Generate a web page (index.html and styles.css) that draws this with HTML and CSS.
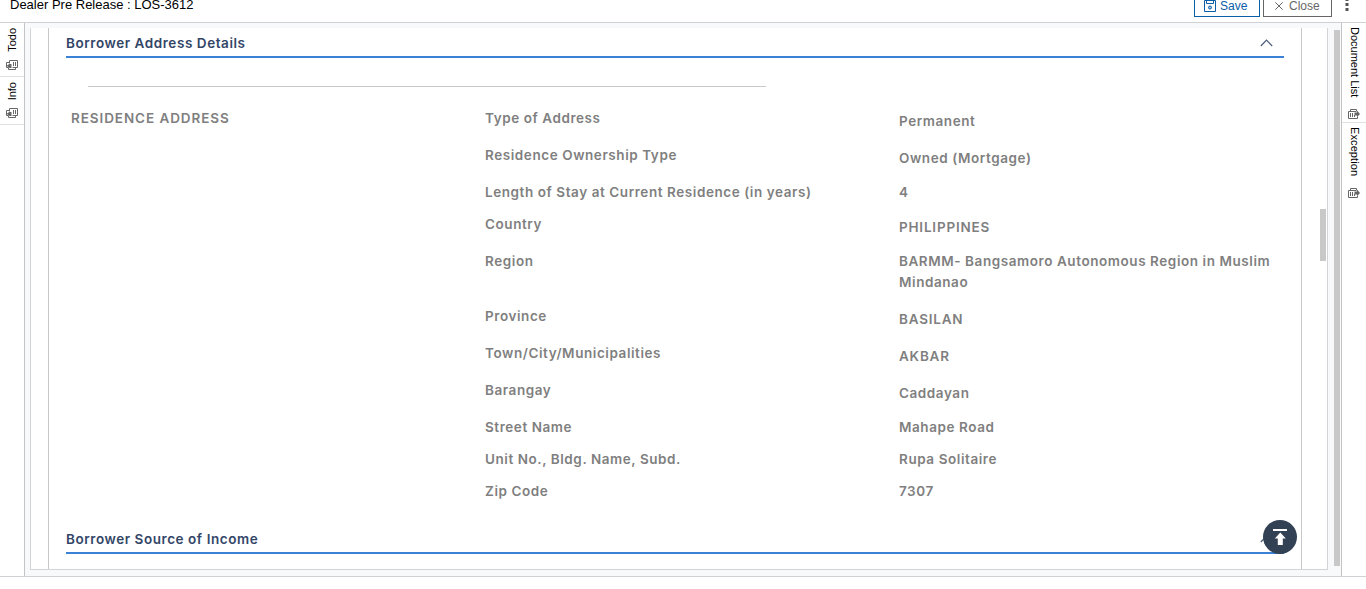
FILE: index.html
```html
<!DOCTYPE html>
<html lang="en">
<head>
<meta charset="utf-8">
<title>Dealer Pre Release : LOS-3612</title>
<link rel="stylesheet" href="styles.css">
</head>
<body>
<svg class="defs" width="0" height="0">
  <symbol id="docs" viewBox="0 0 12 10">
    <path d="M3.500 3.500V.5h8v7h-5M9.500 7.500v2h-7v-2M3.500 2.500h-3v5h2" fill="none" stroke="#666"/>
    <path d="M1 5h1.500V4h3v4h-2l-2-1.500z" fill="#666"/>
    <path d="M7.500 2v4M9.500 2v4" stroke="#666"/>
  </symbol>
  <symbol id="docs-out" viewBox="0 0 12 10">
    <path d="M2.500 2.500v-2h6v2M8 2.500H.5v7h9v-2" fill="none" stroke="#666"/>
    <path d="M6.500 3.500H9V1.500l3 3.500-3 3V6.500H6.500z" fill="#666"/>
    <path d="M2.500 4v4M4.500 4v4M6.500 6v2" stroke="#666"/>
  </symbol>
</svg>
<header class="topbar">
  <h1 class="title">Dealer Pre Release : LOS-3612</h1>
  <div class="actions">
    <button class="btn save">
      <svg width="12" height="12" viewBox="0 0 12 12" fill="none" stroke="#0b5ea8"><path d="M.5.5h11v11H.5zM2.500.5v3h7v-3"/><circle cx="6" cy="7.500" r="1.500" fill="#9cc4e8"/></svg>
      <span>Save</span>
    </button>
    <button class="btn close">
      <svg width="8" height="8" viewBox="0 0 8 8" stroke="#666"><path d="M.3.3l7.400 7.400M7.700.3L.3 7.700"/></svg>
      <span>Close</span>
    </button>
    <svg class="more" width="4" height="16" viewBox="0 0 4 16" fill="#555"><path d="M.5 3h3v3h-3zM.5 8h3v3h-3zM.5 13h3v3h-3z"/></svg>
  </div>
</header>
<div class="workspace">
  <nav class="rail left">
    <div class="tab todo"><span class="up">Todo</span><svg width="12" height="10"><use href="#docs"/></svg></div>
    <div class="tab info"><span class="up">Info</span><svg width="12" height="10"><use href="#docs"/></svg></div>
  </nav>
  <main class="main">
    <div class="panel">
      <div class="card">
        <section class="section">
          <h2 class="heading"><span>Borrower Address Details</span><svg width="13" height="8" viewBox="0 0 13 8" fill="none" stroke="#4b5b78" stroke-width="1.200"><path d="M.8 7l5.700-5.800L12.200 7"/></svg></h2>
          <hr class="rule">
          <div class="details">
            <h3 class="group">RESIDENCE ADDRESS</h3>
            <dl class="rows">
              <div class="row drop"><dt>Type of Address</dt><dd>Permanent</dd></div>
              <div class="row drop"><dt>Residence Ownership Type</dt><dd>Owned (Mortgage)</dd></div>
              <div class="row"><dt>Length of Stay at Current Residence (in years)</dt><dd>4</dd></div>
              <div class="row drop"><dt>Country</dt><dd class="caps">PHILIPPINES</dd></div>
              <div class="row double"><dt>Region</dt><dd>BARMM- Bangsamoro Autonomous Region in Muslim Mindanao</dd></div>
              <div class="row drop"><dt>Province</dt><dd class="caps">BASILAN</dd></div>
              <div class="row drop"><dt>Town/City/Municipalities</dt><dd class="caps">AKBAR</dd></div>
              <div class="row drop"><dt>Barangay</dt><dd>Caddayan</dd></div>
              <div class="row"><dt>Street Name</dt><dd>Mahape Road</dd></div>
              <div class="row"><dt>Unit No., Bldg. Name, Subd.</dt><dd>Rupa Solitaire</dd></div>
              <div class="row"><dt>Zip Code</dt><dd>7307</dd></div>
            </dl>
          </div>
        </section>
        <section class="section">
          <h2 class="heading"><span>Borrower Source of Income</span><svg width="13" height="8" viewBox="0 0 13 8" fill="none" stroke="#4b5b78" stroke-width="1.200"><path d="M.8 7l5.700-5.800L12.200 7"/></svg></h2>
        </section>
      </div>
      <div class="thumb inner"></div>
    </div>
    <div class="thumb outer"></div>
    <svg class="to-top" width="34" height="34" viewBox="0 0 34 34"><circle cx="17" cy="17" r="17" fill="#334155"/><path d="M10 9h14v2H10zM17.300 12.600l5.500 5.900h-3v6.500h-5v-6.500h-3z" fill="#fff"/></svg>
  </main>
  <nav class="rail right">
    <div class="tab doclist"><span>Document List</span><svg width="12" height="10"><use href="#docs-out"/></svg></div>
    <div class="tab exception"><span>Exception</span><svg width="12" height="10"><use href="#docs-out"/></svg></div>
  </nav>
</div>
</body>
</html>
```
FILE: styles.css
```css
* { box-sizing: border-box; }
html, body { margin: 0; height: 589px; overflow: hidden; background: #fff; }
body { font-family: "Liberation Sans", Arial, sans-serif; color: #000; }
h1, h2, h3, dl, dt, dd { margin: 0; }
svg { display: block; flex: none; }
.defs { position: absolute; }

.topbar { display: flex; justify-content: space-between; height: 23px; padding: 0 17px 0 10px; border-bottom: 1px solid #d0d1d4; }
.title { margin-top: -3px; height: 16px; font-size: 13px; line-height: 16px; font-weight: 400; }
.actions { display: flex; align-items: flex-start; gap: 3px; }
.btn { display: flex; align-items: center; height: 25px; margin-top: -8px; padding: 3px 0 0 9px; background: #fff; font: 12px "Liberation Sans", Arial, sans-serif; }
.save { width: 66px; gap: 4px; border: 1px solid #0b5ea8; color: #0b5ea8; }
.close { width: 69px; padding-left: 11px; gap: 6px; border: 1px solid #666; color: #666; }
.more { margin: -5px 0 0 10px; }

.workspace { display: flex; height: 554px; border-bottom: 1px solid #d0d1d4; }
.rail { width: 25px; font-size: 11px; line-height: 14px; }
.rail.left { border-right: 1px solid #c4c4c4; }
.rail.right { border-left: 1px solid #c4c4c4; }
.tab { display: flex; flex-direction: column; align-items: center; justify-content: space-between; border-bottom: 1px solid #e1e1e1; }
.tab span { writing-mode: vertical-rl; white-space: nowrap; }
.right .tab span { line-height: 16px; margin-left: 1px; }
.tab .up { transform: rotate(180deg); }
.todo { height: 54px; padding: 5px 0 6px; }
.info { height: 48px; padding: 5px 0 6px; }
.doclist { height: 100px; padding: 4px 0 3px; }
.exception { height: 79px; padding: 4px 0; border-bottom: 0; letter-spacing: .1px; }

.main { position: relative; flex: 1; padding: 5px 13px 6px 5px; background: #f8f9fb; }
.panel { position: relative; height: 542px; padding: 0 25px 0 17px; border: 1px solid #d2d4d7; border-top: 0; background: #fff; }
.card { height: 541px; padding: 0 17px; border: solid #c8c8c8; border-width: 0 1px; }
.thumb { position: absolute; background: #c8c8c8; }
.inner { top: 181px; right: 1px; width: 6px; height: 52px; }
.outer { top: 7px; right: 1px; width: 6px; height: 536px; }
.to-top { position: absolute; right: 44px; bottom: 22px; }

.section { font-family: Inter, sans-serif; }
.heading { display: flex; align-items: center; justify-content: space-between; height: 30px; padding: 2px 11px 0 0; border-bottom: 2px solid #3b82d6; font-size: 13.5px; line-height: 20px; font-weight: 600; color: #334668; letter-spacing: .56px; }
.rule { width: 678px; height: 1px; margin: 28px 0 0 22px; border: 0; background: #c9c9c9; }
.details { display: grid; grid-template-columns: 414px 1fr; margin-top: 21px; padding-left: 5px; height: 416px; font-size: 13.5px; line-height: 21px; font-weight: 600; color: #7f7f7f; letter-spacing: .57px; }
.group { font: inherit; letter-spacing: .92px; }
.row { display: grid; grid-template-columns: 414px 382px; height: 32px; }
.row.drop { height: 37px; }
.row.double { height: 55px; }
.drop dd { padding-top: 3px; }
.caps { letter-spacing: .8px; }
```
